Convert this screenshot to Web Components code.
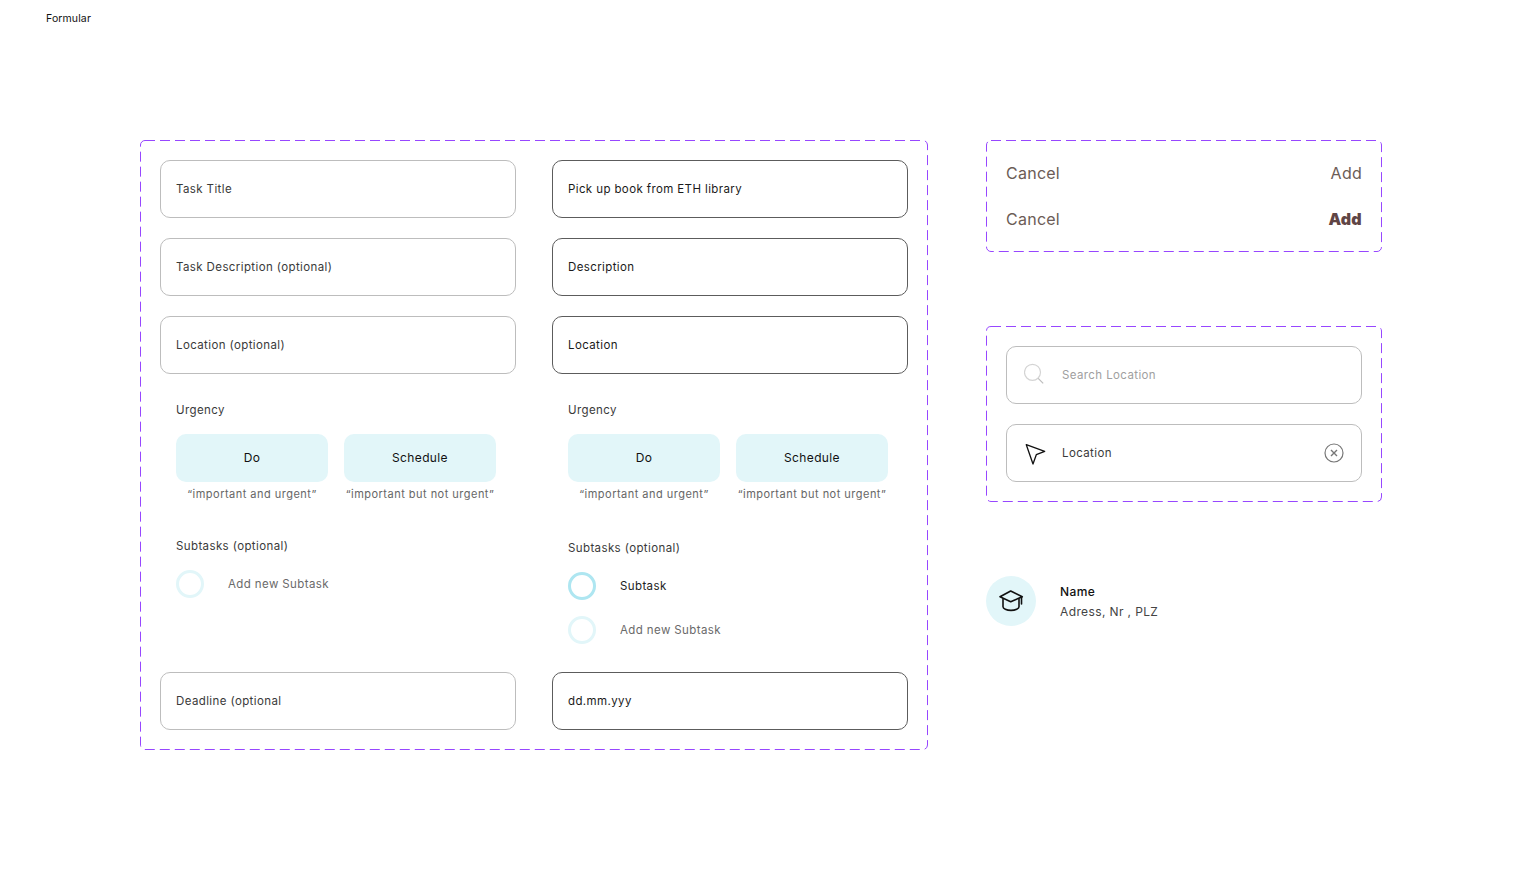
<!DOCTYPE html>
<html>
<head>
<meta charset="utf-8">
<title>Formular</title>
<style>
  html, body { margin: 0; background: #fff; }
  body { font-family: Inter, "Liberation Sans", sans-serif; color: #1c1c1c; }
</style>
</head>
<body>
<form-page>
  <dash-frame style="grid-row: 1 / span 3">
    <div style="display:grid;grid-template-columns:356px 356px;gap:36px">
      <task-form title-text="Task Title" desc="Task Description (optional)" loc="Location (optional)" deadline="Deadline (optional" tone="idle"></task-form>
      <task-form title-text="Pick up book from ETH library" desc="Description" loc="Location" deadline="dd.mm.yyy" tone="filled" subtask="Subtask"></task-form>
    </div>
  </dash-frame>
  <div style="display:flex;flex-direction:column;gap:74px">
    <dash-frame>
      <div style="display:flex;flex-direction:column;gap:20px">
        <action-row></action-row>
        <action-row strong></action-row>
      </div>
    </dash-frame>
    <dash-frame>
      <div style="display:flex;flex-direction:column;gap:20px">
        <text-field tone="search">
          <svg slot="lead" width="24" height="24" viewBox="0 0 24 24" fill="none" stroke="#d4d4d4" stroke-width="1.2"><circle cx="8.500" cy="9.300" r="8"/><path d="M14.200 15.300l5 5" stroke="#bdbdbd"/></svg>
          Search Location
        </text-field>
        <text-field tone="idle" lead-dark>
          <svg slot="lead" width="24" height="24" viewBox="0 0 24 24" fill="none" stroke="#111" stroke-width="1.3" stroke-linejoin="round"><path d="M2.300 3.700l18.400 6.600-8.400 3.400-3.300 9.300z"/></svg>
          Location
          <svg slot="trail" width="20" height="20" viewBox="0 0 20 20" fill="none" stroke="#777" stroke-width="1.2"><circle cx="10" cy="10" r="9"/><path d="M7 7l6 6M13 7l-6 6" stroke-width="1.4"/></svg>
        </text-field>
      </div>
    </dash-frame>
    <place-card name="Name" address="Adress, Nr , PLZ"></place-card>
  </div>
</form-page>

<script>
class FormPage extends HTMLElement {
  constructor() {
    super();
    this.attachShadow({ mode: 'open' });
    this.shadowRoot.innerHTML = `
      <style>
        :host { display: block; width: 1522px; height: 890px; overflow: hidden; }
        .head { height: 140px; box-sizing: border-box; padding: 11px 46px; font-size: 10.5px; line-height: 16px; color: #111; letter-spacing: 0.12px; }
        .canvas { display: grid; grid-template-columns: 788px 396px; column-gap: 58px; padding-left: 140px; align-items: start; }
      </style>
      <div class="head">Formular</div>
      <div class="canvas"><slot></slot></div>
    `;
  }
}

class DashFrame extends HTMLElement {
  constructor() {
    super();
    this.attachShadow({ mode: 'open' });
    this.shadowRoot.innerHTML = `
      <style>
        :host { display: block; position: relative; padding: 20px; }
        svg { position: absolute; inset: 0; width: 100%; height: 100%; pointer-events: none; }
        rect { x: 0.5px; y: 0.5px; width: calc(100% - 1px); height: calc(100% - 1px); fill: none; stroke: #9747ff; stroke-dasharray: 10 5; }
      </style>
      <svg><rect rx="4.5"></rect></svg>
      <slot></slot>
    `;
  }
}

class TextField extends HTMLElement {
  constructor() {
    super();
    this.attachShadow({ mode: 'open' });
    this.shadowRoot.innerHTML = `
      <style>
        :host { display: flex; align-items: center; box-sizing: border-box; height: 58px; padding: 0 15px; border: 1px solid #bdbdbd; border-radius: 10px; font-size: 11.5px; letter-spacing: 0.39px; color: #3a3a3a; }
        :host([tone="filled"]) { border-color: #5c5c5c; color: #1a1a1a; }
        :host([tone="search"]) { color: #a0a0a0; }
        .lead { display: none; width: 38px; margin-left: 2px; flex: none; }
        :host([tone="search"]) .lead, :host([lead-dark]) .lead { display: flex; }
        .text { flex: 1; padding-bottom: 1px; }
        .trail { display: flex; margin-right: 2px; }
      </style>
      <span class="lead"><slot name="lead"></slot></span>
      <span class="text"><slot></slot></span>
      <span class="trail"><slot name="trail"></slot></span>
    `;
  }
}

class UrgencyTile extends HTMLElement {
  constructor() {
    super();
    this.attachShadow({ mode: 'open' });
    this.shadowRoot.innerHTML = `
      <style>
        :host { display: block; width: 152px; }
        .tile { height: 47px; padding-bottom: 1px; display: flex; align-items: center; justify-content: center; background: #e2f6f9; border-radius: 10px; font-size: 12px; letter-spacing: 0.36px; color: #111; }
        .note { margin-top: 4px; text-align: center; font-size: 11px; line-height: 16px; letter-spacing: 0.48px; color: #666; white-space: nowrap; }
      </style>
      <div class="tile">${this.getAttribute('label')}</div>
      <div class="note">${this.getAttribute('note')}</div>
    `;
  }
}

class SubtaskRow extends HTMLElement {
  constructor() {
    super();
    this.attachShadow({ mode: 'open' });
    this.shadowRoot.innerHTML = `
      <style>
        :host { display: flex; align-items: center; gap: 24px; height: 28px; font-size: 11.5px; letter-spacing: 0.39px; color: #6a6a6a; }
        :host([active]) { color: #222; }
        i { box-sizing: border-box; width: 28px; height: 28px; border-radius: 50%; border: 3px solid #e2f6f9; }
        :host([active]) i { border-color: #aee6f1; }
        span { padding-bottom: 1px; }
      </style>
      <i></i><span><slot></slot></span>
    `;
  }
}

class TaskForm extends HTMLElement {
  constructor() {
    super();
    this.attachShadow({ mode: 'open' });
    const tone = this.getAttribute('tone');
    const subtask = this.getAttribute('subtask');
    this.shadowRoot.innerHTML = `
      <style>
        :host { display: flex; flex-direction: column; height: 570px; }
        .fields { display: flex; flex-direction: column; gap: 20px; }
        .body { padding-left: 16px; }
        .label { font-size: 11.5px; line-height: 16px; letter-spacing: 0.39px; color: #3a3a3a; }
        .urgency { margin-top: 28px; }
        .tiles { display: flex; gap: 16px; margin-top: 16px; }
        .subtasks { margin-top: ${subtask ? 38 : 36}px; }
        .rows { display: flex; flex-direction: column; gap: 16px; margin-top: 16px; }
        .deadline { margin-top: auto; }
      </style>
      <div class="fields">
        <text-field tone="${tone}">${this.getAttribute('title-text')}</text-field>
        <text-field tone="${tone}">${this.getAttribute('desc')}</text-field>
        <text-field tone="${tone}">${this.getAttribute('loc')}</text-field>
      </div>
      <div class="body">
        <div class="urgency label">Urgency</div>
        <div class="tiles">
          <urgency-tile label="Do" note="“important and urgent”"></urgency-tile>
          <urgency-tile label="Schedule" note="“important but not urgent”"></urgency-tile>
        </div>
        <div class="subtasks label">Subtasks (optional)</div>
        <div class="rows">
          ${subtask ? `<subtask-row active>${subtask}</subtask-row>` : ''}
          <subtask-row>Add new Subtask</subtask-row>
        </div>
      </div>
      <text-field class="deadline" tone="${tone}">${this.getAttribute('deadline')}</text-field>
    `;
  }
}

class ActionRow extends HTMLElement {
  constructor() {
    super();
    this.attachShadow({ mode: 'open' });
    this.shadowRoot.innerHTML = `
      <style>
        :host { display: flex; justify-content: space-between; align-items: center; height: 26px; font-size: 16px; letter-spacing: 0.25px; color: #6c5c56; }
        :host([strong]) b { font-weight: 900; color: #604545; letter-spacing: 0.3px; }
        b { font-weight: 400; }
      </style>
      <span>Cancel</span><b>Add</b>
    `;
  }
}

class PlaceCard extends HTMLElement {
  constructor() {
    super();
    this.attachShadow({ mode: 'open' });
    this.shadowRoot.innerHTML = `
      <style>
        :host { display: flex; align-items: center; gap: 24px; }
        .badge { width: 50px; height: 50px; border-radius: 50%; background: #e2f6f9; display: flex; align-items: center; justify-content: center; }
        .text { padding-top: 1px; }
        .name { font-size: 12px; line-height: 20px; font-weight: 500; letter-spacing: 0.42px; color: #111; }
        .addr { font-size: 12px; line-height: 20px; letter-spacing: 0.38px; color: #444; }
      </style>
      <div class="badge">
        <svg width="26" height="26" viewBox="0 0 26 26" fill="none" stroke="#111" stroke-width="1.6" stroke-linejoin="round" stroke-linecap="round">
          <path d="M12.700 3L2 8.700l10.700 5 11.600-5z"/>
          <path d="M5 10.700v8c0 2 3.500 3.700 8 3.700s8-1.700 8-3.700v-8"/>
          <path d="M23.500 9.500v6.500"/>
        </svg>
      </div>
      <div class="text">
        <div class="name">${this.getAttribute('name')}</div>
        <div class="addr">${this.getAttribute('address')}</div>
      </div>
    `;
  }
}

customElements.define('text-field', TextField);
customElements.define('urgency-tile', UrgencyTile);
customElements.define('subtask-row', SubtaskRow);
customElements.define('task-form', TaskForm);
customElements.define('action-row', ActionRow);
customElements.define('place-card', PlaceCard);
customElements.define('dash-frame', DashFrame);
customElements.define('form-page', FormPage);
</script>
</body>
</html>
